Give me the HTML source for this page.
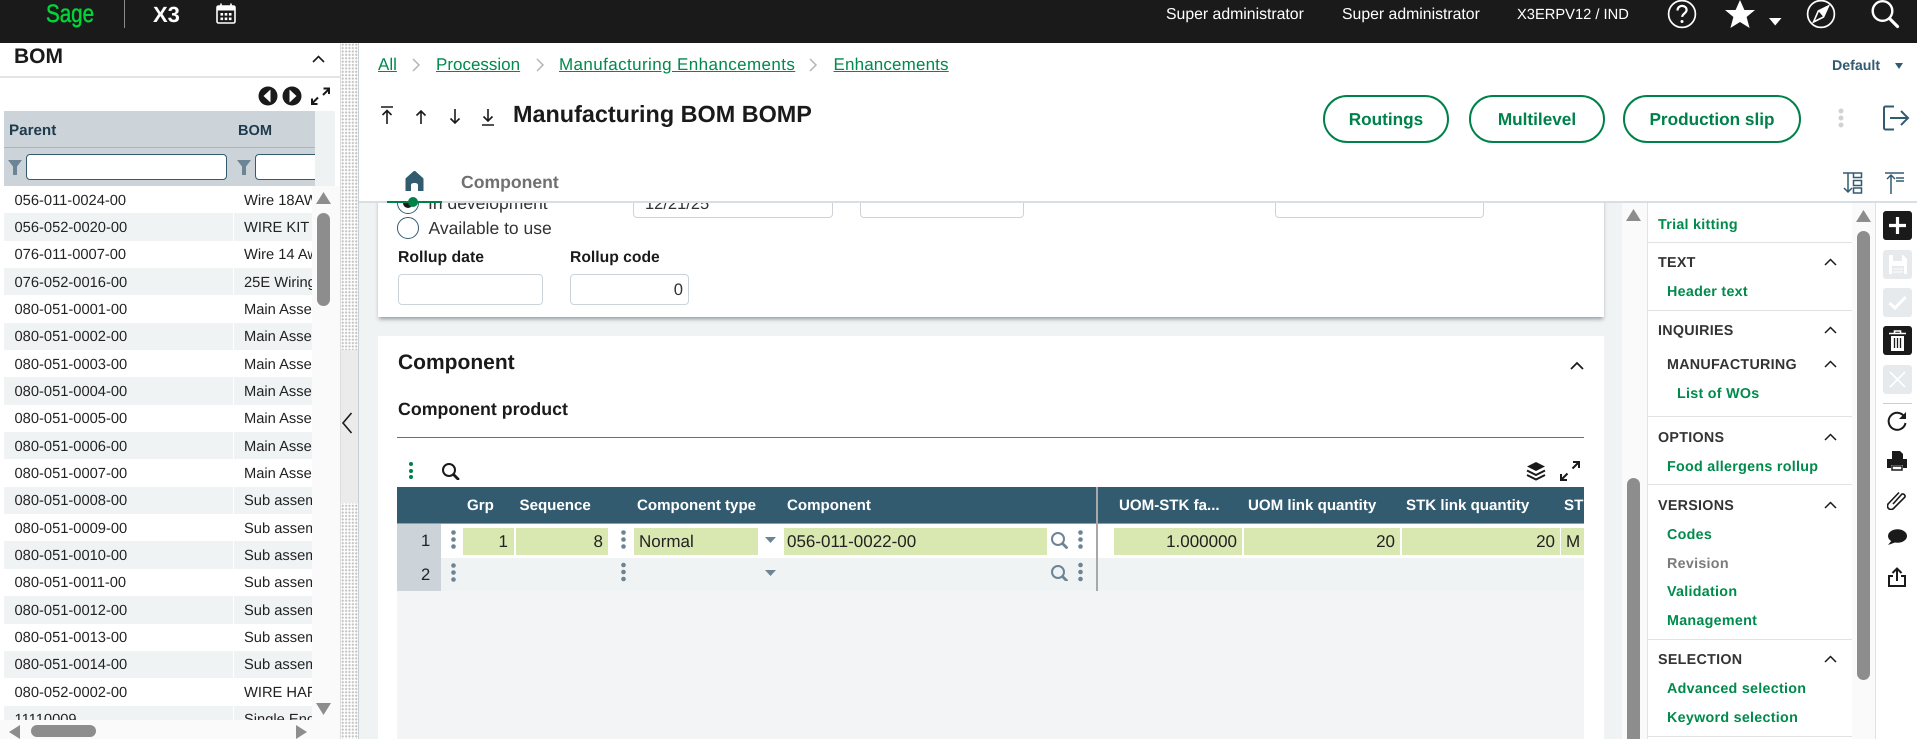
<!DOCTYPE html>
<html><head><meta charset="utf-8"><title>Manufacturing BOM BOMP</title>
<style>
html,body{margin:0;padding:0;width:1917px;height:739px;overflow:hidden;background:#fff;font-family:"Liberation Sans",sans-serif;color:#1a1a1a;text-rendering:geometricPrecision}
div,span,a,svg{position:absolute;box-sizing:border-box}
.t{white-space:nowrap;line-height:20px;height:20px}
.b{font-weight:bold}
.bc{color:#008a4b;text-decoration:underline;font-size:17px}
.hd{color:#fff;font-weight:bold;font-size:15.1px}
.btn{border:2px solid #00814a;border-radius:24px;color:#00814a;font-weight:bold;font-size:17.2px;text-align:center;line-height:44px;top:95px;height:48px;background:#fff}
.row{position:relative;left:0;width:308px;height:27.35px;font-size:14.7px;line-height:27.35px;white-space:nowrap;overflow:hidden}
.row span{top:1.5px;color:#222}
.row .a{left:10.5px}
.row .c{left:240px}
.alt{background:#f0f3f4}
.sep{left:229px;top:0;width:1px;height:100%;background:#fff}
.cell{background:#d8e8b0;top:528px;height:27px;font-size:17px;line-height:28px;color:#222;white-space:nowrap;overflow:hidden}
.m{font-size:14.3px;font-weight:bold;line-height:20px;height:20px;margin-top:1px;white-space:nowrap;letter-spacing:.28px}
.g{color:#008a4b}
.h{color:#333}
.d{left:1648px;width:204px;height:1px;background:#dfe3e6}
.tb{left:1883px;width:29px;height:29px;border-radius:3px;background:#1a1a1a}
.tl{background:#e6eaec}
.inp{border:1px solid #ccd4da;border-radius:4px;background:#fff}
</style></head><body>

<!-- top bar -->
<div style="left:0;top:0;width:1917px;height:43px;background:#1a1a1a"></div>
<span class="t" style="left:46px;top:0;height:30px;line-height:30px;font-size:21px;color:#00d639;-webkit-text-stroke:.4px #00d639;transform-origin:0 50%;transform:scale(.98,1.2)">Sage</span>
<div style="left:124px;top:0;width:1px;height:28px;background:#8a8a8a"></div>
<span class="t b" style="left:153px;top:5px;font-size:22px;color:#fff">X3</span>
<svg style="left:216px;top:3px" width="20" height="21" viewBox="0 0 20 21"><rect x="1" y="3" width="18" height="17" rx="1.5" fill="#1a1a1a" stroke="#fff" stroke-width="1.6"/><rect x="1" y="3" width="18" height="4.5" fill="#fff"/><path d="M5 0.5v4M15 0.5v4" stroke="#fff" stroke-width="1.6"/><g fill="#fff"><rect x="4.5" y="10" width="2.6" height="2.6"/><rect x="8.7" y="10" width="2.6" height="2.6"/><rect x="12.9" y="10" width="2.6" height="2.6"/><rect x="4.5" y="14.5" width="2.6" height="2.6"/><rect x="8.7" y="14.5" width="2.6" height="2.6"/><rect x="12.9" y="14.5" width="2.6" height="2.6"/></g></svg>
<span class="t" style="left:1166px;top:5px;font-size:15.8px;color:#fff">Super administrator</span>
<span class="t" style="left:1342px;top:5px;font-size:15.8px;color:#fff">Super administrator</span>
<span class="t" style="left:1517px;top:5px;font-size:14.7px;color:#fff">X3ERPV12 / IND</span>
<svg style="left:1667px;top:0" width="30" height="29" viewBox="0 0 30 29"><circle cx="15" cy="14" r="13.4" fill="none" stroke="#fff" stroke-width="1.7"/><path d="M10.5 10.5c0-3 2.2-4.6 4.6-4.6 2.6 0 4.5 1.7 4.5 4 0 3.5-4.4 3.6-4.4 7" fill="none" stroke="#fff" stroke-width="2.2"/><circle cx="15" cy="21.5" r="1.5" fill="#fff"/></svg>
<svg style="left:1724px;top:0" width="32" height="29" viewBox="0 0 32 29"><path d="M16 0l4.4 10h10.6l-8.4 7 3 11-9.6-6-9.6 6 3-11L1 10h10.6z" fill="#fff"/></svg>
<svg style="left:1769px;top:17px" width="13" height="9" viewBox="0 0 13 9"><path d="M0 1h12.5L6.2 8.5z" fill="#fff"/></svg>
<svg style="left:1806px;top:0" width="30" height="29" viewBox="0 0 30 29"><circle cx="15" cy="14" r="13.4" fill="none" stroke="#fff" stroke-width="1.7"/><path d="M22.5 6L17.5 17 7.5 22l4.8-11z" fill="none" stroke="#fff" stroke-width="1.6"/><path d="M22.5 6L12.3 11l5.2 6z" fill="#fff"/></svg>
<svg style="left:1870px;top:0" width="30" height="29" viewBox="0 0 30 29"><circle cx="12.5" cy="11" r="9.8" fill="none" stroke="#fff" stroke-width="2.4"/><path d="M19.5 18.5l8 8" stroke="#fff" stroke-width="3.2" stroke-linecap="round"/></svg>

<!-- left sidebar -->
<span class="t b" style="left:14px;top:46px;font-size:21px;height:22px;line-height:22px">BOM</span>
<svg style="left:312px;top:55px" width="13" height="8" viewBox="0 0 13 8"><path d="M1 7l5.5-5.5L12 7" fill="none" stroke="#1a1a1a" stroke-width="1.6"/></svg>
<div style="left:0;top:76px;width:340px;height:2px;background:#e2e5e7"></div>
<svg style="left:258px;top:86px" width="72" height="20" viewBox="0 0 72 20"><circle cx="10" cy="10" r="9.5" fill="#1a1a1a"/><path d="M12.5 3.5v13L5.5 10z" fill="#fff"/><circle cx="34" cy="10" r="9.5" fill="#1a1a1a"/><path d="M31.5 3.5v13L38.5 10z" fill="#fff"/><path d="M54 17.5l6-6M54 12.5v5.5h5.5" fill="none" stroke="#1a1a1a" stroke-width="2"/><path d="M71 3l-6 6M65.5 2.5h5.5V8" fill="none" stroke="#1a1a1a" stroke-width="2"/></svg>

<div style="left:4px;top:111px;width:331px;height:75px;background:#eff2f3"></div>
<div style="left:4px;top:111px;width:311px;height:75px;background:#ccd4da;overflow:hidden">
  <div style="left:0;top:36px;width:311px;height:1px;background:#aab6be"></div>
  <span class="t b" style="left:5px;top:10px;font-size:15.2px;color:#1f3a4d">Parent</span>
  <span class="t b" style="left:234px;top:10px;font-size:14.6px;color:#1f3a4d">BOM</span>
  <svg style="left:4px;top:49px" width="14" height="15" viewBox="0 0 14 15"><path d="M0 0h14L9 6.5V15H5V6.5z" fill="#6c8494"/></svg>
  <div style="left:22px;top:43px;width:201px;height:26px;background:#fff;border:1px solid #335b70;border-radius:4px"></div>
  <svg style="left:233px;top:49px" width="14" height="15" viewBox="0 0 14 15"><path d="M0 0h14L9 6.5V15H5V6.5z" fill="#6c8494"/></svg>
  <div style="left:251px;top:43px;width:80px;height:26px;background:#fff;border:1px solid #335b70;border-radius:4px"></div>
</div>

<div style="left:4px;top:186px;width:308px;height:534px;overflow:hidden;background:#fff">
  <div class="row"><span class="a">056-011-0024-00</span><span class="c">Wire 18AWG</span></div>
  <div class="row alt"><i class="sep" style="position:absolute"></i><span class="a">056-052-0020-00</span><span class="c">WIRE KIT #</span></div>
  <div class="row"><span class="a">076-011-0007-00</span><span class="c">Wire 14 Awg</span></div>
  <div class="row alt"><i class="sep" style="position:absolute"></i><span class="a">076-052-0016-00</span><span class="c">25E Wiring</span></div>
  <div class="row"><span class="a">080-051-0001-00</span><span class="c">Main Assembly</span></div>
  <div class="row alt"><i class="sep" style="position:absolute"></i><span class="a">080-051-0002-00</span><span class="c">Main Assembly</span></div>
  <div class="row"><span class="a">080-051-0003-00</span><span class="c">Main Assembly</span></div>
  <div class="row alt"><i class="sep" style="position:absolute"></i><span class="a">080-051-0004-00</span><span class="c">Main Assembly</span></div>
  <div class="row"><span class="a">080-051-0005-00</span><span class="c">Main Assembly</span></div>
  <div class="row alt"><i class="sep" style="position:absolute"></i><span class="a">080-051-0006-00</span><span class="c">Main Assembly</span></div>
  <div class="row"><span class="a">080-051-0007-00</span><span class="c">Main Assembly</span></div>
  <div class="row alt"><i class="sep" style="position:absolute"></i><span class="a">080-051-0008-00</span><span class="c">Sub assembly</span></div>
  <div class="row"><span class="a">080-051-0009-00</span><span class="c">Sub assembly</span></div>
  <div class="row alt"><i class="sep" style="position:absolute"></i><span class="a">080-051-0010-00</span><span class="c">Sub assembly</span></div>
  <div class="row"><span class="a">080-051-0011-00</span><span class="c">Sub assembly</span></div>
  <div class="row alt"><i class="sep" style="position:absolute"></i><span class="a">080-051-0012-00</span><span class="c">Sub assembly</span></div>
  <div class="row"><span class="a">080-051-0013-00</span><span class="c">Sub assembly</span></div>
  <div class="row alt"><i class="sep" style="position:absolute"></i><span class="a">080-051-0014-00</span><span class="c">Sub assembly</span></div>
  <div class="row"><span class="a">080-052-0002-00</span><span class="c">WIRE HARNESS</span></div>
  <div class="row alt"><i class="sep" style="position:absolute"></i><span class="a">11110009</span><span class="c">Single End</span></div>
</div>
<div style="left:312px;top:186px;width:28px;height:534px;background:#fafafa"></div>
<svg style="left:316px;top:192px" width="15" height="12" viewBox="0 0 15 12"><path d="M7.5 0L15 12H0z" fill="#8d8d8d"/></svg>
<div style="left:317px;top:213px;width:13px;height:93px;border-radius:6.5px;background:#8d8d8d"></div>
<svg style="left:316px;top:703px" width="15" height="12" viewBox="0 0 15 12"><path d="M7.5 12L15 0H0z" fill="#8d8d8d"/></svg>
<div style="left:0;top:720px;width:340px;height:19px;background:#fafafa"></div>
<svg style="left:9px;top:725px" width="12" height="14" viewBox="0 0 12 14"><path d="M0 7L11 0v14z" fill="#8d8d8d"/></svg>
<div style="left:31px;top:725px;width:65px;height:12px;border-radius:6px;background:#8d8d8d"></div>
<svg style="left:295px;top:725px" width="12" height="14" viewBox="0 0 12 14"><path d="M12 7L1 0v14z" fill="#8d8d8d"/></svg>

<!-- splitter -->
<div style="left:340px;top:43px;width:18px;height:696px;background-color:#fff;background-image:radial-gradient(#c4c4c4 1px,transparent 1.2px);background-size:3.4px 3.4px;border-left:1px solid #ddd"></div>
<div style="left:340px;top:350px;width:18px;height:153px;background:#ebebeb;border-left:1px solid #ddd"></div>
<svg style="left:341px;top:412px" width="12" height="22" viewBox="0 0 12 22"><path d="M10.5 1L2 11l8.5 10" fill="none" stroke="#1a1a1a" stroke-width="1.6"/></svg>
<div style="left:358px;top:43px;width:1px;height:696px;background:#c8ced2"></div>

<!-- main background -->
<div style="left:359px;top:203px;width:1558px;height:536px;background:#f0f3f4"></div>

<!-- form card 1 (clipped by header) -->
<div style="left:378px;top:170px;width:1226px;height:147px;background:#fff;box-shadow:0 3px 4px -1px rgba(60,80,90,.55)"></div>
<div style="left:397px;top:192px;width:22px;height:22px;border-radius:11px;border:1px solid #335b70;background:#fff"></div>
<div style="left:403px;top:198px;width:10px;height:10px;border-radius:5px;background:#1a1a1a"></div>
<span class="t" style="left:428px;top:193px;font-size:17.5px;color:#333">In development</span>
<div style="left:397px;top:217px;width:22px;height:22px;border-radius:11px;border:1px solid #335b70;background:#fff"></div>
<span class="t" style="left:428.5px;top:218px;font-size:17.5px;color:#333">Available to use</span>
<div class="inp" style="left:633px;top:190px;width:200px;height:28px"></div>
<span class="t" style="left:645px;top:194px;font-size:16.5px;color:#333">12/21/25</span>
<div class="inp" style="left:860px;top:190px;width:164px;height:28px"></div>
<div class="inp" style="left:1275px;top:190px;width:209px;height:28px"></div>
<span class="t b" style="left:398px;top:248px;font-size:15.8px">Rollup date</span>
<span class="t b" style="left:570px;top:248px;font-size:15.7px">Rollup code</span>
<div class="inp" style="left:398px;top:274px;width:145px;height:31px"></div>
<div class="inp" style="left:570px;top:274px;width:119px;height:31px;text-align:right;padding-right:5px;font-size:16.6px;line-height:29px;color:#333">0</div>

<!-- main header -->
<div style="left:359px;top:43px;width:1558px;height:158px;background:#fff"></div>
<a class="t bc" style="left:378px;top:55px">All</a>
<svg style="left:412px;top:58px" width="9" height="14" viewBox="0 0 9 14"><path d="M1 1l6 6-6 6" fill="none" stroke="#b5b5b5" stroke-width="1.5"/></svg>
<a class="t bc" style="left:436px;top:55px">Procession</a>
<svg style="left:536px;top:58px" width="9" height="14" viewBox="0 0 9 14"><path d="M1 1l6 6-6 6" fill="none" stroke="#b5b5b5" stroke-width="1.5"/></svg>
<a class="t bc" style="left:559px;top:55px;letter-spacing:.4px">Manufacturing Enhancements</a>
<svg style="left:809px;top:58px" width="9" height="14" viewBox="0 0 9 14"><path d="M1 1l6 6-6 6" fill="none" stroke="#b5b5b5" stroke-width="1.5"/></svg>
<a class="t bc" style="left:833.5px;top:55px;letter-spacing:.15px">Enhancements</a>

<svg style="left:380px;top:106px" width="116" height="20" viewBox="0 0 116 20"><g fill="none" stroke="#1a1a1a" stroke-width="1.6"><path d="M1 1h12M7 18V5M2.5 9L7 4.5 11.500 9"/><path d="M41 18V5M36.500 9.500L41 5l4.500 4.500"/><path d="M75 3v14M70.500 12.500L75 17l4.500-4.500"/><path d="M108 3v12M103.500 10.500l4.500 4.500 4.500-4.500M102 19h12"/></g></svg>
<span class="t b" style="left:513px;top:102px;height:24px;line-height:24px;font-size:23.4px;color:#1a1a1a">Manufacturing BOM BOMP</span>

<div class="btn" style="left:1323px;width:126px">Routings</div>
<div class="btn" style="left:1469px;width:136px">Multilevel</div>
<div class="btn" style="left:1623px;width:178px">Production slip</div>
<svg style="left:1836px;top:108px" width="10" height="20" viewBox="0 0 10 20"><g fill="#d2d2d2"><circle cx="5" cy="3" r="2.500"/><circle cx="5" cy="10" r="2.500"/><circle cx="5" cy="17" r="2.500"/></g></svg>
<svg style="left:1883px;top:105px" width="27" height="26" viewBox="0 0 27 26"><path d="M11 1.500H2.500a1.500 1.500 0 0 0-1.500 1.500v20a1.500 1.500 0 0 0 1.500 1.500H11M7 13h18M18 6l7 7-7 7" fill="none" stroke="#335b70" stroke-width="2"/></svg>
<span class="t b" style="left:1832px;top:56px;font-size:14.2px;color:#335b70">Default</span>
<svg style="left:1895px;top:63px" width="8" height="6" viewBox="0 0 8 6"><path d="M0 0h8L4 6z" fill="#335b70"/></svg>

<svg style="left:405px;top:171px" width="19" height="20" viewBox="0 0 19 20"><path d="M9.500 0c.6 0 1.100.3 1.500.7l7 6.300c.4.400.5.800.5 1.300V20h-5.500v-6c0-1-1-2-3.500-2s-3.500 1-3.500 2v6H.5V8.300c0-.5.100-.9.500-1.300L8 .7C8.400.3 8.900 0 9.500 0z" fill="#335b70"/></svg>
<span class="t b" style="left:461px;top:172px;font-size:17.6px;color:#707070">Component</span>
<svg style="left:1843px;top:172px" width="20" height="22" viewBox="0 0 20 22"><g fill="none" stroke="#335b70" stroke-width="1.500"><path d="M5 1v19M1 16l4 4 4-4M0 1h10"/><rect x="10.500" y="1" width="8" height="4.500"/><rect x="10.500" y="8.500" width="8" height="5"/><rect x="10.500" y="16" width="8" height="5"/></g></svg>
<svg style="left:1885px;top:172px" width="20" height="22" viewBox="0 0 20 22"><g fill="none" stroke="#335b70" stroke-width="1.500"><path d="M6 3v19M2 7l4-4 4 4M0 1h12"/><path d="M11 6h8M11 9h8M12 1h7"/></g></svg>
<div style="left:359px;top:201px;width:1558px;height:2px;background:#d8dfe3"></div>
<div style="left:387px;top:201px;width:55px;height:2px;background:#00814a"></div>
<div style="left:408px;top:197px;width:10px;height:10px;border-radius:5px;background:#00814a"></div>

<!-- card 2 -->
<div style="left:378px;top:336px;width:1226px;height:403px;background:#fff"></div>
<span class="t b" style="left:398px;top:353px;font-size:21px;color:#1a1a1a">Component</span>
<svg style="left:1570px;top:361px" width="14" height="9" viewBox="0 0 14 9"><path d="M1 8l6-6 6 6" fill="none" stroke="#1a1a1a" stroke-width="1.700"/></svg>
<span class="t b" style="left:398px;top:399px;font-size:17.800px">Component product</span>
<div style="left:397px;top:437px;width:1187px;height:1px;background:#6e6e6e"></div>
<svg style="left:408px;top:461px" width="8" height="19" viewBox="0 0 8 19"><g fill="#00814a"><circle cx="3" cy="3" r="2"/><circle cx="3" cy="10" r="2"/><circle cx="3" cy="16" r="2"/></g></svg>
<svg style="left:441px;top:462px" width="19" height="18" viewBox="0 0 19 18"><circle cx="8" cy="8" r="6" fill="none" stroke="#1a1a1a" stroke-width="2"/><path d="M12.500 12.500l4.500 4.500" stroke="#1a1a1a" stroke-width="2.800" stroke-linecap="round"/></svg>
<svg style="left:1526px;top:462px" width="20" height="19" viewBox="0 0 20 19"><path d="M10 0l9 4.500-9 4.500-9-4.500z" fill="#1a1a1a"/><path d="M1 8.500l9 4.500 9-4.500M1 13l9 4.500L19 13" fill="none" stroke="#1a1a1a" stroke-width="2"/></svg>
<svg style="left:1560px;top:461px" width="20" height="20" viewBox="0 0 20 20"><path d="M1 19l6.500-6.500M1 13v6h6" fill="none" stroke="#1a1a1a" stroke-width="2"/><path d="M19 1l-6.500 6.500M13 1h6v6" fill="none" stroke="#1a1a1a" stroke-width="2"/></svg>

<div style="left:397px;top:487px;width:1187px;height:252px;background:#f3f4f5"></div>
<div style="left:397px;top:487px;width:1187px;height:37px;background:#335b70;border-bottom:1px solid #8ba0ad;overflow:hidden">
  <span class="t hd" style="left:70px;top:9px">Grp</span>
  <span class="t hd" style="left:122.500px;top:9px">Sequence</span>
  <span class="t hd" style="left:240px;top:9px">Component type</span>
  <span class="t hd" style="left:390px;top:9px">Component</span>
  <span class="t hd" style="left:722px;top:9px">UOM-STK fa...</span>
  <span class="t hd" style="left:851px;top:9px">UOM link quantity</span>
  <span class="t hd" style="left:1009px;top:9px">STK link quantity</span>
  <span class="t hd" style="left:1167px;top:9px">STK</span>
</div>
<div style="left:397px;top:524px;width:1187px;height:34px;background:#fff"></div>
<div style="left:441px;top:558px;width:1143px;height:33px;background:#f0f3f4"></div>
<div style="left:397px;top:524px;width:44px;height:67px;background:#ccd4da"></div>
<span class="t" style="left:421px;top:531px;font-size:16.6px;color:#222">1</span>
<span class="t" style="left:421px;top:565px;font-size:16.6px;color:#222">2</span>

<div class="cell" style="left:463px;width:51px;text-align:right;padding-right:6px">1</div>
<div class="cell" style="left:516px;width:92px;text-align:right;padding-right:5px">8</div>
<div class="cell" style="left:634px;width:124px;padding-left:5px">Normal</div>
<div class="cell" style="left:784px;width:263px;padding-left:3px">056-011-0022-00</div>
<div class="cell" style="left:1114px;width:128px;text-align:right;padding-right:5px">1.000000</div>
<div class="cell" style="left:1244px;width:156px;text-align:right;padding-right:5px">20</div>
<div class="cell" style="left:1402px;width:158px;text-align:right;padding-right:5px">20</div>
<div class="cell" style="left:1561px;width:23px;padding-left:5px">M</div>

<svg style="left:449px;top:530px" width="9" height="52" viewBox="0 0 9 52"><g fill="#6c8494"><circle cx="4.500" cy="2.500" r="2.300"/><circle cx="4.500" cy="9.500" r="2.300"/><circle cx="4.500" cy="16.500" r="2.300"/><circle cx="4.500" cy="35.500" r="2.300"/><circle cx="4.500" cy="42.500" r="2.300"/><circle cx="4.500" cy="49.500" r="2.300"/></g></svg>
<svg style="left:619px;top:530px" width="9" height="52" viewBox="0 0 9 52"><g fill="#6c8494"><circle cx="4.500" cy="2.500" r="2.300"/><circle cx="4.500" cy="9.500" r="2.300"/><circle cx="4.500" cy="16.500" r="2.300"/><circle cx="4.500" cy="35" r="2.300"/><circle cx="4.500" cy="42" r="2.300"/><circle cx="4.500" cy="49" r="2.300"/></g></svg>
<svg style="left:765px;top:537px" width="11" height="40" viewBox="0 0 11 40"><path d="M0 0h11L5.500 6zM0 33h11l-5.500 6z" fill="#6c8494"/></svg>
<svg style="left:1050px;top:531px" width="19" height="50" viewBox="0 0 19 50"><g fill="none" stroke="#6c8494"><circle cx="8" cy="8" r="6" stroke-width="2"/><path d="M12.500 12.500l4 4" stroke-width="2.800" stroke-linecap="round"/><circle cx="8" cy="41" r="6" stroke-width="2"/><path d="M12.500 45.500l4 4" stroke-width="2.800" stroke-linecap="round"/></g></svg>
<svg style="left:1076px;top:530px" width="9" height="52" viewBox="0 0 9 52"><g fill="#6c8494"><circle cx="4.500" cy="2.500" r="2.300"/><circle cx="4.500" cy="9.500" r="2.300"/><circle cx="4.500" cy="16.500" r="2.300"/><circle cx="4.500" cy="35" r="2.300"/><circle cx="4.500" cy="42" r="2.300"/><circle cx="4.500" cy="49" r="2.300"/></g></svg>
<div style="left:1096px;top:487px;width:2px;height:104px;background:#a8a8a8"></div>

<!-- content scrollbar -->
<div style="left:1622px;top:203px;width:26px;height:536px;background:#fafafa"></div>
<svg style="left:1626px;top:209px" width="15" height="12" viewBox="0 0 15 12"><path d="M7.500 0L15 12H0z" fill="#8d8d8d"/></svg>
<div style="left:1627px;top:478px;width:13px;height:261px;border-radius:6.500px 6.500px 0 0;background:#8d8d8d"></div>

<!-- menu panel -->
<div style="left:1647px;top:203px;width:205px;height:536px;background:#fff;border-left:1px solid #dfe3e6"></div>
<span class="m g" style="left:1658px;top:214px">Trial kitting</span>
<div class="d" style="top:242px"></div>
<span class="m h" style="left:1658px;top:252px">TEXT</span>
<span class="m g" style="left:1667px;top:281px">Header text</span>
<div class="d" style="top:310px"></div>
<span class="m h" style="left:1658px;top:320px">INQUIRIES</span>
<span class="m h" style="left:1667px;top:354px">MANUFACTURING</span>
<span class="m g" style="left:1677px;top:383px">List of WOs</span>
<div class="d" style="top:416px"></div>
<span class="m h" style="left:1658px;top:427px">OPTIONS</span>
<span class="m g" style="left:1667px;top:456px">Food allergens rollup</span>
<div class="d" style="top:484px"></div>
<span class="m h" style="left:1658px;top:495px">VERSIONS</span>
<span class="m g" style="left:1667px;top:524px">Codes</span>
<span class="m" style="left:1667px;top:553px;color:#7b7b7b">Revision</span>
<span class="m g" style="left:1667px;top:581px">Validation</span>
<span class="m g" style="left:1667px;top:610px">Management</span>
<div class="d" style="top:639px"></div>
<span class="m h" style="left:1658px;top:649px">SELECTION</span>
<span class="m g" style="left:1667px;top:678px">Advanced selection</span>
<span class="m g" style="left:1667px;top:707px">Keyword selection</span>
<div class="d" style="top:736px"></div>
<svg style="left:1824px;top:258px" width="13" height="406" viewBox="0 0 13 406"><g fill="none" stroke="#1a1a1a" stroke-width="1.500"><path d="M1 7l5.500-5.500L12 7"/><path d="M1 75l5.500-5.500L12 75"/><path d="M1 109l5.500-5.500L12 109"/><path d="M1 182l5.500-5.500L12 182"/><path d="M1 250l5.500-5.500L12 250"/><path d="M1 404l5.500-5.500L12 404"/></g></svg>

<!-- menu scrollbar -->
<div style="left:1852px;top:203px;width:23px;height:536px;background:#fafafa"></div>
<svg style="left:1856px;top:210px" width="15" height="12" viewBox="0 0 15 12"><path d="M7.500 0L15 12H0z" fill="#8d8d8d"/></svg>
<div style="left:1857px;top:231px;width:13px;height:449px;border-radius:6.500px;background:#8d8d8d"></div>
<div style="left:1875px;top:203px;width:42px;height:536px;background:#fff;border-left:1px solid #dfe3e6"></div>

<!-- right toolbar -->
<div class="tb" style="top:211px"></div>
<svg style="left:1888px;top:216px" width="19" height="19" viewBox="0 0 19 19"><path d="M9.500 1v17M1 9.500h17" stroke="#fff" stroke-width="3.200"/></svg>
<div class="tb tl" style="top:250px"></div>
<svg style="left:1887px;top:254px" width="21" height="21" viewBox="0 0 21 21"><path d="M2 1h14l4 4v15H2z" fill="#fff"/><rect x="6" y="1" width="9" height="6" fill="#e6eaec"/><rect x="5" y="12" width="12" height="8" fill="#e6eaec"/><path d="M6 15h10M6 18h10" stroke="#fff"/></svg>
<div class="tb tl" style="top:288px"></div>
<svg style="left:1888px;top:295px" width="19" height="15" viewBox="0 0 19 15"><path d="M1.500 8l5.500 5L17.500 2" fill="none" stroke="#fff" stroke-width="3"/></svg>
<div class="tb" style="top:326px"></div>
<svg style="left:1889px;top:330px" width="17" height="21" viewBox="0 0 17 21"><path d="M0 3.500h17M5.500 3V1h6v2" fill="none" stroke="#fff" stroke-width="1.600"/><path d="M2 6h13v15H2z" fill="#fff"/><path d="M5.500 8v10M8.500 8v10M11.500 8v10" stroke="#1a1a1a" stroke-width="1.300"/></svg>
<div class="tb tl" style="top:365px"></div>
<svg style="left:1889px;top:371px" width="17" height="17" viewBox="0 0 17 17"><path d="M1 1l15 15M16 1L1 16" stroke="#fff" stroke-width="1.800"/></svg>
<div style="left:1883px;top:403px;width:29px;height:1px;background:#c9ced1"></div>
<svg style="left:1887px;top:411px" width="20" height="21" viewBox="0 0 20 21"><path d="M17.500 6A8.500 8.500 0 1 0 18.500 12" fill="none" stroke="#1a1a1a" stroke-width="2"/><path d="M19 1v7h-7z" fill="#1a1a1a"/></svg>
<svg style="left:1887px;top:451px" width="20" height="20" viewBox="0 0 20 20"><path d="M5 0h8l3 3v5H5z" fill="#1a1a1a"/><path d="M0 8h20v9h-4v-3H4v3H0z" fill="#1a1a1a"/><rect x="5" y="15" width="10" height="4" fill="none" stroke="#1a1a1a" stroke-width="1.500"/></svg>
<svg style="left:1887px;top:489px" width="20" height="21" viewBox="0 0 20 21"><path d="M7 14L16 4a2.500 2.500 0 0 1 3 3L7.500 18.500a3.500 3.500 0 0 1-5-5L13 2.500" fill="none" stroke="#1a1a1a" stroke-width="1.600" transform="translate(-1 1)"/></svg>
<svg style="left:1887px;top:529px" width="20" height="17" viewBox="0 0 20 17"><ellipse cx="10.500" cy="7" rx="9.500" ry="6.800" fill="#1a1a1a"/><path d="M5 11l-4 5 7-2.500z" fill="#1a1a1a"/></svg>
<svg style="left:1888px;top:567px" width="18" height="20" viewBox="0 0 18 20"><path d="M5 9H1v10h16V9h-4" fill="none" stroke="#1a1a1a" stroke-width="2"/><path d="M9 14V2M4.500 6L9 1.500 13.500 6" fill="none" stroke="#1a1a1a" stroke-width="2"/></svg>
</body></html>
